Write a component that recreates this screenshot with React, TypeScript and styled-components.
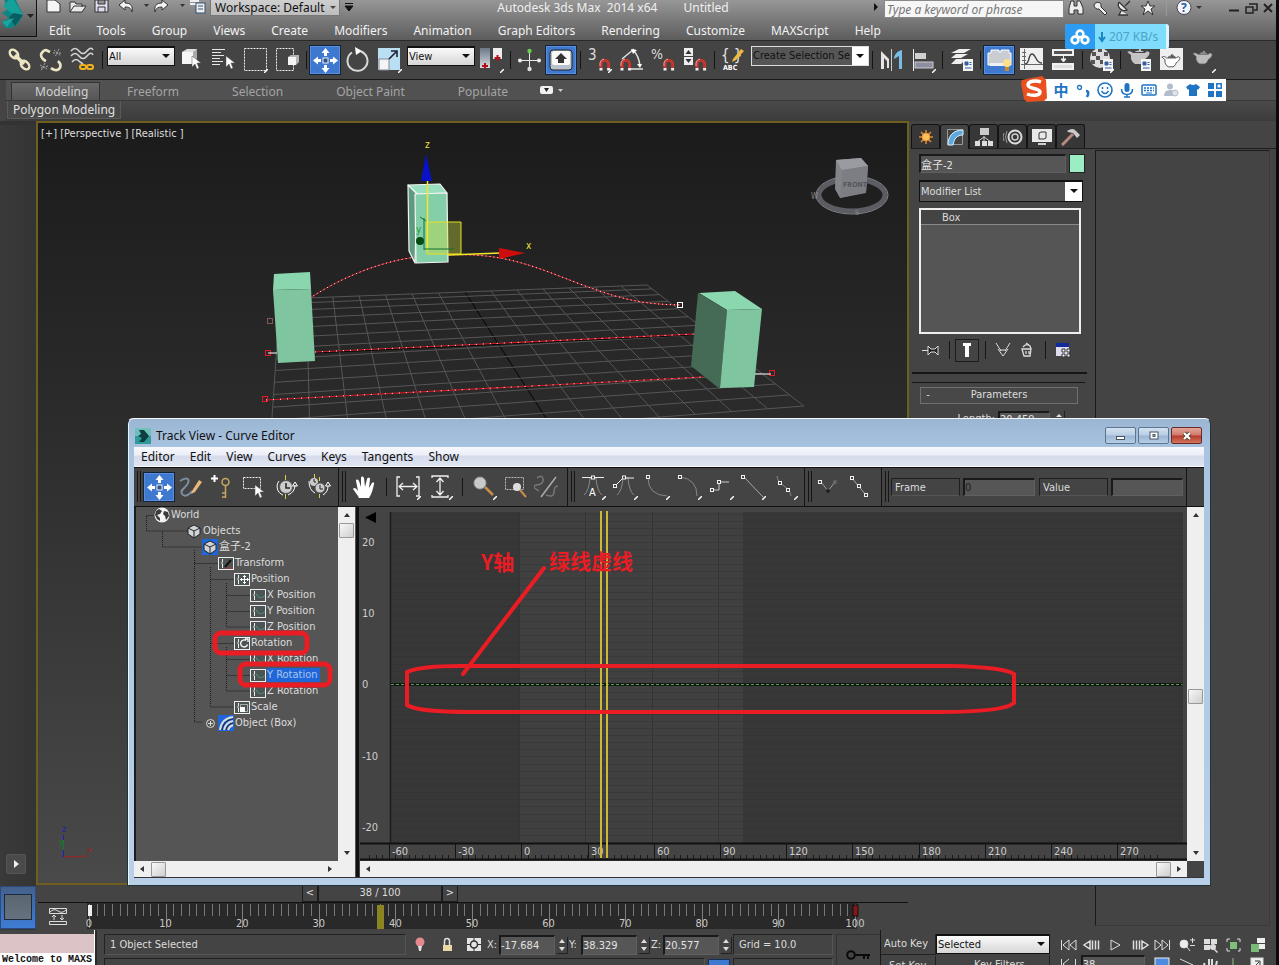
import React from 'react';
import styled, { createGlobalStyle, css } from 'styled-components';

const UI = '"Noto Sans", "Open Sans", "Noto Sans CJK SC", sans-serif';
const SMALL = '"DejaVu Sans Condensed", "Noto Sans", "Noto Sans CJK SC", sans-serif';

const Global = createGlobalStyle`
  * { box-sizing: border-box; }
  html, body { margin: 0; height: 100%; overflow: hidden; background: #444; }
  body { font: 11px/14px ${SMALL}; color: #dcdcdc; }
  button, input, select { font: inherit; color: inherit; margin: 0; padding: 0; border: 0; border-radius: 0; background: none; outline: none; min-width: 0; }
  svg { display: block; flex: none; }
`;

/* ---------- icons ---------- */

const magnet = (x: number, y: number) => (
  <g>
    <path d={`M${x} ${y + 9}v-4a3.800 3.800 0 0 1 7.600 0v4`} fill="none" stroke="#c4372f" strokeWidth="3" />
    <path d={`M${x} ${y + 9}v2.500M${x + 7.6} ${y + 9}v2.500`} stroke="#eee" strokeWidth="3" />
    <path d={`M${x - 1} ${y + 7}v-3a5 5 0 0 1 4 -4`} fill="none" stroke="#f2a39c" />
  </g>
);
const corner = <path d="M27 23v1l-3 3h-1v-1l3-3z" fill="#fff" stroke="none" />;
const curveNode = (x: number, y: number) => <rect x={x - 1.5} y={y - 1.5} width="3" height="3" fill="#444" stroke="#f0f0f0" />;
const cursor = (x: number, y: number) => (
  <path d={`M${x} ${y}v11l3-3 2 5 2-1-2-5h4z`} fill="#fff" stroke="#555" strokeWidth=".5" />
);
const listBadge = (
  <g>
    <rect x="16" y="13" width="10" height="12" fill="#f4f4f4" />
    <path d="M18 16h3v3h-3zM22.500 16.500h2M22.500 18.500h2M18 22h6.500" stroke="#355f9e" fill="#355f9e" />
  </g>
);
const teapot = (
  <path d="M5 12c-2-1-3-3-4-3 3-2 5 0 6 1h12c2-3 6-1 4 2-1 2-3 3-4 4-1 3-2 4-4 5H9c-2-1-3-3-4-5zM9 9c1-2 7-2 9 0zM13 6h2v2h-2z" />
);
const moveArrows = (
  <g fill="#fff">
    <rect x="12" y="12" width="5" height="5" fill="#35507c" stroke="#e8eefc" />
    <path d="M14.500 2l4 5h-2.500v3h-3V7h-2.500zM14.500 27l-4-5h2.500v-3h3v3h2.500zM2 14.500l5-4v2.500h3v3H7v2.500zM27 14.500l-5 4v-2.500h-3v-3h3v-2.500z" />
  </g>
);

const icons: Record<string, React.ReactNode> = {
  link: (
    <g fill="none" stroke="#ece5c4" strokeWidth="2.400">
      <ellipse cx="9" cy="8" rx="5" ry="3.400" transform="rotate(45 9 8)" />
      <ellipse cx="20" cy="19" rx="5" ry="3.400" transform="rotate(45 20 19)" />
      <path d="M10 9l9 9" strokeWidth="3.500" />
    </g>
  ),
  unlink: (
    <g fill="none" stroke="#ece5c4" strokeWidth="2.600">
      <path d="M9 15c-3-1-5-4-5-6s3-5 5-5l4 2M14 22c2 2 6 3 8 1s2-5-1-8" />
      <path d="M17 4l7 6M22 3l-4 8M16 7h9M3 19l7 4M8 17l-4 8M11 20l-7 2" stroke="#aaa" strokeWidth="1" strokeDasharray="2 1" />
    </g>
  ),
  bind: (
    <g fill="none">
      <path d="M2 5q4-5 8 0t8 0 6-1M2 10q4-5 8 0t8 0 6-1M3 16q4-5 8 0l3 2" stroke="#d5d5d5" strokeWidth="1.600" />
      <rect x="11" y="19" width="6" height="4" rx="2" stroke="#f2b41c" strokeWidth="2" />
      <rect x="18" y="19" width="6" height="4" rx="2" stroke="#f2b41c" strokeWidth="2" />
    </g>
  ),
  selectObj: (
    <g>
      <path d="M5 6l5-3h10v11l-4 4H5z" fill="#ddd" />
      <path d="M5 6h11v12H5z" fill="#f6f6f6" />
      <path d="M16 6l4-3v12l-4 3z" fill="#a9a9a9" />
      {cursor(15, 10)}
    </g>
  ),
  selectName: (
    <g>
      <path d="M3 3.500h13M3 6.500h9M3 9.500h12M3 12.500h8M3 15.500h11M3 18.500h8" stroke="#e6e6e6" />
      {cursor(17, 10)}
    </g>
  ),
  region: (
    <g>
      <rect x="3.500" y="2.500" width="22" height="22" fill="none" stroke="#eee" strokeDasharray="2 1" />
      {corner}
    </g>
  ),
  windowCross: (
    <g>
      <rect x="3.500" y="2.500" width="17" height="22" fill="none" stroke="#eee" strokeDasharray="2 1" />
      <path d="M15 11l3-2h8v7l-3 3h-8z" fill="#b5b5b5" />
      <path d="M15 11h8v8h-8z" fill="#f4f4f4" />
    </g>
  ),
  move: moveArrows,
  rotate: (
    <g>
      <path d="M9 6.500a10 10 0 1 0 9 -1" fill="none" stroke="#d9d9d9" strokeWidth="2" />
      <path d="M12 1l7 4-6 4z" fill="#fff" />
    </g>
  ),
  scale: (
    <g>
      <rect x="3" y="2" width="22" height="22" fill="#b9e0f2" />
      <path d="M4 13h10v11H4z" fill="#f4f4f4" stroke="#889" />
      <path d="M14 13l7-7M16 5h6v6" stroke="#223" fill="none" strokeWidth="1.600" />
      {corner}
    </g>
  ),
  pivot: (
    <g>
      <rect x="3" y="2" width="10" height="20" fill="url(#pv)" />
      <rect x="16" y="2" width="9" height="11" fill="#eee" />
      <path d="M8 17v6M5 20h6M20.500 9v6M17.500 12h6" stroke="#b3111a" strokeWidth="2" />
      <defs>
        <linearGradient id="pv" x1="0" y1="0" x2="0" y2="1">
          <stop offset="0" stopColor="#6b7886" />
          <stop offset="1" stopColor="#d6dbe0" />
        </linearGradient>
      </defs>
      {corner}
    </g>
  ),
  manipulate: (
    <g>
      <path d="M14.500 5v18M5 14.500h20" stroke="#e8e8e8" />
      <circle cx="14.500" cy="5" r="2.200" fill="#6ccc4a" />
      <circle cx="5" cy="14.500" r="2" fill="#eee" />
      <circle cx="24" cy="14.500" r="2" fill="#eee" />
      <circle cx="14.500" cy="23" r="2.200" fill="#ddd" />
    </g>
  ),
  keyboard: (
    <g>
      <rect x="3" y="4" width="22" height="20" rx="3" fill="#b9c2cc" stroke="#222" />
      <rect x="5" y="5" width="18" height="14" rx="2" fill="#fafafa" />
      <path d="M14 7l6 6h-3v4h-6v-4H8z" fill="#333" />
    </g>
  ),
  snap3: (
    <g>
      <text x="3" y="14" fontSize="15" fill="#ddd">3</text>
      {magnet(16, 13)}
      {corner}
    </g>
  ),
  snapAngle: (
    <g>
      {magnet(5, 13)}
      <path d="M5 13L17 3M13 23h13M16 4q6 6 7 16" fill="none" stroke="#e2e2e2" strokeWidth="1.500" />
      <path d="M14 3l6 1-4 4zM20 18h5l-2 4z" fill="#fff" />
    </g>
  ),
  snapPct: (
    <g>
      <text x="2" y="13" fontSize="14" fill="#ddd">%</text>
      {magnet(16, 13)}
    </g>
  ),
  snapSpin: (
    <g>
      <rect x="3" y="2" width="9" height="8" fill="#eee" />
      <rect x="3" y="11" width="9" height="8" fill="#eee" />
      <path d="M7.500 4l3 4h-6zM7.500 17l3-4h-6z" fill="#333" />
      {magnet(16, 13)}
    </g>
  ),
  named: (
    <g>
      <text x="2" y="14" fontSize="15" fill="#e8e8e8">{'{ }'}</text>
      <path d="M14 13l8-10 3 2-8 9-4 2z" fill="#f0b93c" />
      <text x="4" y="24" fontSize="7" fontWeight="700" fill="#fff">ABC</text>
    </g>
  ),
  mirror: (
    <g>
      <path d="M4 23V5l8 8v9h-2v-7l-3-3v11z" fill="#e5e5e5" />
      <path d="M25 23V4c-5 1-8 5-8 9l5-3v13z" fill="#79bde6" />
      <path d="M14.500 3v22" stroke="#ccc" />
    </g>
  ),
  align: (
    <g>
      <path d="M4.500 3v22" stroke="#eee" />
      <rect x="6" y="7" width="11" height="6" fill="#d0d0d0" />
      <rect x="6" y="16" width="18" height="6" fill="#8c8fa0" stroke="#ccc" />
      {corner}
    </g>
  ),
  layers: (
    <g>
      <path d="M12 3h12l-7 4H4zM9 8h12l-7 4H4zM9 13h10l-5 5H4z" fill="#eee" />
      {listBadge}
    </g>
  ),
  ribbonBulb: (
    <g>
      <path d="M3 7h3V4h8v2h2V4h8v3h2v12H3z" fill="#c9cdd2" stroke="#fff" />
      <path d="M5 17h19v3H5z" fill="#eef0f2" />
      <circle cx="22" cy="17" r="4" fill="#ffe08a" />
      <rect x="20" y="21" width="4" height="4" fill="#c98c22" />
    </g>
  ),
  curveEd: (
    <g>
      <rect x="3" y="2" width="23" height="22" fill="#efefef" />
      <path d="M7.500 3v20M4 18.500h22M5 6.500h4M5 10.500h4M5 14.500h4" stroke="#666" />
      <path d="M8 18c5 0 3-10 7-10s4 10 10 9" fill="none" stroke="#444" strokeWidth="1.500" />
    </g>
  ),
  schematic: (
    <g>
      <rect x="4" y="4" width="20" height="5" fill="#555" stroke="#f0f0f0" strokeWidth="2" />
      <rect x="4" y="18" width="20" height="5" fill="#ddd" stroke="#f0f0f0" strokeWidth="2" />
      <path d="M14.500 9v5M12 13h5l-2.500 3z" stroke="#eee" fill="#eee" />
    </g>
  ),
  material: (
    <g>
      <circle cx="13" cy="12" r="10" fill="#ddd" />
      <path d="M5 6h4v4H5zM11 2h4v4h-4zM9 10h4v4H9zM17 6h4v4h-4zM4 14h4v4H4zM13 14h4v4h-4z" fill="#555" />
      {listBadge}
      {corner}
    </g>
  ),
  renderSetup: (
    <g>
      <g fill="#c4c4c4" transform="translate(1 -3)">{teapot}</g>
      {listBadge}
    </g>
  ),
  renderFrame: (
    <g>
      <rect x="3" y="2" width="23" height="22" fill="#efefef" />
      <g fill="#fff" stroke="#333" transform="translate(4 4) scale(.8)">{teapot}</g>
    </g>
  ),
  render: (
    <g>
      <g fill="#bbb" stroke="#777" strokeWidth=".5" transform="translate(3 0) scale(.85)">{teapot}</g>
      {corner}
    </g>
  ),
  /* curve editor */
  draw: (
    <g>
      <path d="M3 8c6-4 10-3 8 2s-9 7-6 11 8 0 10-3" fill="none" stroke="#7d8fa3" strokeWidth="2" />
      <path d="M15 18l7-11 3 2-7 10-4 2z" fill="#e6b87c" />
    </g>
  ),
  addKey: (
    <g>
      <path d="M5.500 2v7M2 5.500h7" stroke="#fff" strokeWidth="2" />
      <circle cx="16.500" cy="9" r="3.500" fill="none" stroke="#c7a860" strokeWidth="1.500" />
      <path d="M16.500 12v13M16 20h-3M16 24h-3" stroke="#c7a860" strokeWidth="1.500" />
    </g>
  ),
  regionKeys: (
    <g>
      <rect x="2.500" y="4.500" width="17" height="11" fill="none" stroke="#eee" strokeDasharray="2 1" />
      {cursor(14, 12)}
    </g>
  ),
  retime: (
    <g>
      <circle cx="13" cy="14" r="6.500" fill="#ccc" stroke="#555" />
      <path d="M13 10v5h4" stroke="#222" strokeWidth="1.500" fill="none" />
      <path d="M12.500 2v5M12.500 21v5" stroke="#e0cf4a" />
      <path d="M6 8a9 9 0 0 0 4 14M15 22q7-3 7-10M19.500 13l2.500-4 2.500 4z" stroke="#fff" fill="none" />
    </g>
  ),
  retimeAll: (
    <g>
      <circle cx="9" cy="9" r="4" fill="#ccc" />
      <circle cx="15" cy="15" r="5" fill="#ccc" stroke="#555" />
      <path d="M15 12v4h3M9 6v3h2" stroke="#222" fill="none" />
      <path d="M9.500 1v4M14.500 21v4M14.500 4v4" stroke="#e0cf4a" />
      <path d="M4 8q0 9 6 12M18 22q5-3 5-9M20.500 13l2.500-4 2.500 4z" stroke="#fff" fill="none" />
    </g>
  ),
  hand: (
    <path d="M9 25c-2-4-4-6-6-9 1-2 3-1 5 2L6 8c0-2 2-2 3 0l2 6V5c0-2 2-2 3 0l1 9 2-8c1-2 3-1 3 0l-1 9 3-5c1-1 3 0 2 1-1 5-2 9-5 14z" fill="#fff" />
  ),
  extH: (
    <g fill="none" stroke="#f0f0f0" strokeWidth="1.300">
      <path d="M6 4H3v19h3M22 4h3v19h-3M6 13.500h16M9 10l-4 3.500L9 17M19 10l4 3.500-4 3.500" />
      {corner}
    </g>
  ),
  extV: (
    <g fill="none" stroke="#f0f0f0" strokeWidth="1.300">
      <path d="M6 5V3h16v2M6 22v2h16v-2M14 6v15M10.500 9L14 5l3.500 4M10.500 18l3.500 4 3.500-4" />
      {corner}
    </g>
  ),
  zoom: (
    <g>
      <path d="M15 14l8 8" stroke="#c98f4a" strokeWidth="2.500" />
      <circle cx="10" cy="10" r="6" fill="#c9c9c9" stroke="#999" />
      {corner}
    </g>
  ),
  zoomRegion: (
    <g>
      <rect x="3.500" y="4.500" width="18" height="12" fill="none" stroke="#bbb" strokeDasharray="2 1" />
      <path d="M18 17l6 7" stroke="#c98f4a" strokeWidth="2" />
      <circle cx="15" cy="14" r="4" fill="#ddd" />
    </g>
  ),
  isolate: (
    <g fill="none" stroke="#777">
      <path d="M3 5q5-4 6 1t-6 6 2 6M12 22q8 3 8-3t4-6" strokeWidth="1.500" />
      <path d="M22 4L7 24" stroke="#aaa" strokeWidth="1.500" />
    </g>
  ),
  tanAuto: (
    <g fill="none" stroke="#aaa">
      <path d="M5 22q5-4 6-17h6q1 13 6 17" stroke="#888" />
      <path d="M3 4.500h22" stroke="#eee" />
      {curveNode(14, 4.5)}
      <text x="10" y="23" fontSize="11" fill="#fff" stroke="none">A</text>
      {corner}
    </g>
  ),
  tanSpline: (
    <g fill="none" stroke="#888">
      <path d="M6 22q5-4 6-17h5q1 13 6 17" />
      <path d="M4 13l8-8h11" stroke="#eee" />
      {curveNode(4, 13)}
      {curveNode(13, 4.5)}
      {corner}
    </g>
  ),
  tanFast: (
    <g fill="none" stroke="#888">
      <path d="M5 5q0 17 19 18" />
      {curveNode(5, 4)}
      {corner}
    </g>
  ),
  tanSlow: (
    <g fill="none" stroke="#888">
      <path d="M5 4q17 2 17 19" />
      {curveNode(5, 4)}
      {corner}
    </g>
  ),
  tanStep: (
    <g fill="none" stroke="#ccc">
      <path d="M6 17h6V9h10" />
      {curveNode(5, 17)}
      {curveNode(12, 9)}
      {corner}
    </g>
  ),
  tanLinear: (
    <g fill="none" stroke="#aaa">
      <path d="M5 4l19 20" />
      {curveNode(4, 4)}
      {corner}
    </g>
  ),
  tanSmooth: (
    <g fill="none" stroke="#888">
      <path d="M6 3q0 5 7 10t7 10" />
      {curveNode(9, 10)}
      {curveNode(17, 17)}
      {corner}
    </g>
  ),
  breakTan: (
    <g fill="none" stroke="#999">
      <path d="M5 9l7 9 7-9" />
      {curveNode(4, 9)}
      <rect x="18" y="8" width="2" height="2" fill="#444" stroke="#777" />
      <path d="M10 17h4l-2 3z" fill="#111" stroke="#222" />
    </g>
  ),
  unifyTan: (
    <g fill="none" stroke="#aaa">
      <path d="M3 4l15 18" />
      {curveNode(4, 5)}
      {curveNode(11, 13)}
      {curveNode(18, 22)}
    </g>
  ),
};

const Icon = ({ name, size = 28 }: { name: string; size?: number }) => (
  <svg width={size} height={size} viewBox="0 0 28 28" aria-hidden="true">
    {icons[name]}
  </svg>
);

/* ---------- shell ---------- */

const Shell = styled.div`
  position: relative;
  display: flex;
  flex-direction: column;
  height: 100vh;
  border-right: 3px solid #0a0a0a;
  background: #444;
  overflow: hidden;
`;

const Header = styled.header`
  display: grid;
  grid-template-columns: 37px 1fr;
  height: 41px;
  flex: none;
  background: linear-gradient(#979797, #5c5c5c);
  border-bottom: 1px solid #2a2a2a;
  font-family: ${UI};
`;

const AppButton = styled.button`
  height: 37px;
  border-right: 1px solid #111;
  border-bottom: 1px solid #111;
  background: linear-gradient(#8a8a8a, #4e4e4e);
`;

const TitleRow = styled.div`
  display: flex;
  height: 20px;
  align-items: flex-start;
`;

const Quick = styled.div`
  display: flex;
  width: 173px;
  padding-left: 5px;
`;

const TitleText = styled.div`
  flex: 1;
  display: flex;
  justify-content: center;
  gap: 26px;
  padding-right: 4px;
  font-size: 12px;
  line-height: 16px;
  color: #f0f0f0;
  white-space: pre;
`;

const Search = styled.input`
  width: 180px;
  height: 18px;
  margin-left: 4px;
  padding: 0 2px;
  border: 1px solid #888;
  background: #f6f6f6;
  font: italic 12px/16px ${UI};
  &::placeholder { color: #777; opacity: 1; }
`;

const MenuBar = styled.nav<{ $light?: boolean }>`
  display: flex;
  align-items: center;
  gap: ${(p) => (p.$light ? 15 : 26)}px;
  padding: ${(p) => (p.$light ? '0 0 0 7px' : '2px 0 0 12px')};
  height: 20px;
  color: ${(p) => (p.$light ? '#111' : '#f2f2f2')};
  font: 12px/18px ${UI};
  flex: none;
  ${(p) => p.$light && css`background: linear-gradient(#f7f8fd, #eceff8 40%, #d7dcec 50%, #dfe4f2); border-bottom: 1px solid #f8f8f8;`}
`;

const MenuItem = styled.button`white-space: nowrap;`;

const ToolBar = styled.div`
  display: flex;
  align-items: center;
  height: 39px;
  flex: none;
  padding-left: 3px;
  border-bottom: 1px solid #1a1a1a;
  background: #444;
`;

const ToolButton = styled.button<{ $on?: boolean }>`
  display: grid;
  place-items: center;
  width: 32px;
  height: 30px;
  flex: none;
  ${(p) => p.$on && css`background: #3f78cf; border: 1px solid #14233c; box-shadow: inset 0 0 0 1px #5b8fdc;`}
`;

const Sep = styled.i<{ $w?: number }>`
  width: ${(p) => p.$w ?? 6}px;
  height: 18px;
  flex: none;
  background: linear-gradient(#151515, #151515) center / 1px 100% no-repeat;
`;

const Drop = styled.span<{ $w: number; $h: number; $tone?: 'dark' | 'field' | 'title' }>`
  position: relative;
  display: block;
  flex: none;
  width: ${(p) => p.$w}px;
  height: ${(p) => p.$h}px;
  select {
    appearance: none;
    display: block;
    width: 100%;
    height: 100%;
    padding: 0 18px 0 1px;
    border: 1px solid #111;
    border-top-width: 2px;
    background: linear-gradient(#fafafa, #d6d6d6);
    color: #111;
    ${(p) => p.$tone === 'dark' && css`background: linear-gradient(90deg, #565656 0 calc(100% - 16px), #fff calc(100% - 16px)); border: 1px solid #ddd; color: #111;`}
    ${(p) => p.$tone === 'field' && css`background: linear-gradient(90deg, #555 0 calc(100% - 17px), #fff calc(100% - 17px)); color: #ddd;`}
    ${(p) => p.$tone === 'title' && css`background: linear-gradient(#cfcfcf, #bdbdbd); border: 1px solid #777; border-top: 0; padding: 0 12px 0 4px; font: 12px/14px ${UI};`}
  }
  &::after {
    content: '';
    position: absolute;
    right: ${(p) => (p.$tone === 'title' ? 4 : 5)}px;
    top: calc(50% - 2px);
    border: ${(p) => (p.$tone === 'title' ? 3 : 4)}px solid transparent;
    border-top-color: ${(p) => (p.$tone === 'title' ? '#444' : '#111')};
    border-bottom: 0;
    pointer-events: none;
  }
`;

const Select = ({ label, value, w, h, tone }: { label: string; value: string; w: number; h: number; tone?: 'dark' | 'field' | 'title' }) => (
  <Drop $w={w} $h={h} $tone={tone}>
    <select aria-label={label} defaultValue={value}>
      <option>{value}</option>
    </select>
  </Drop>
);

const SelectSlot = styled.div`padding: 0 0 8px 2px;`;

const RibbonTabs = styled.div`
  display: flex;
  align-items: flex-end;
  height: 21px;
  flex: none;
  margin-left: 6px;
  padding-left: 5px;
  border-bottom: 1px solid #383838;
  background: #515151;
  font: 12px/20px ${UI};
`;

const RibbonTab = styled.button<{ $on?: boolean; $last?: boolean }>`
  margin-right: ${(p) => (p.$last ? 32 : 53)}px;
  color: #a4a4a4;
  height: 18px;
  white-space: nowrap;
  ${(p) => p.$on && css`
    width: 89px;
    padding-left: 23px;
    margin-right: 27px;
    text-align: left;
    color: #d2d2d2;
    border: 1px solid #333;
    border-bottom: 0;
    line-height: 16px;
    background: linear-gradient(#686868, #565656);
  `}
`;

const RibbonPanel = styled.div`
  height: 20px;
  flex: none;
  margin-left: 6px;
  padding-left: 1px;
  background: linear-gradient(#4a4a4a, #3b3b3b);
  font: 12px/18px ${UI};
`;

const PanelTab = styled.button`
  height: 18px;
  padding: 0 5px;
  border: 1px solid #5a5a5a;
  border-top: 0;
  background: #484848;
  color: #e0e0e0;
`;

const Workspace = styled.main`
  display: grid;
  grid-template-columns: 36px minmax(0, 1fr) 367px;
  flex: 1;
  min-height: 0;
`;

const LeftStrip = styled.aside`
  display: flex;
  flex-direction: column;
  justify-content: flex-end;
  border-top: 4px solid #333;
  background: linear-gradient(90deg, #3a3a3a, #343434);
`;

const PlayButton = styled.button`
  display: grid;
  place-items: center;
  width: 20px;
  height: 20px;
  margin: 0 0 12px 6px;
  border: 1px solid #555;
  border-radius: 2px;
  background: #4a4a4a;
`;

const LayoutButton = styled.button`
  height: 43px;
  padding: 7px 3px 8px;
  border: 1px solid #2a4a80;
  background: linear-gradient(#44608a, #3d7dd6);
  margin-bottom: 1px;
`;

const LayoutFace = styled.span`
  display: block;
  height: 100%;
  border: 1px solid #1e2a3c;
  background: linear-gradient(#5b6673, #66727f);
`;

const Center = styled.section`
  display: flex;
  flex-direction: column;
  min-height: 0;
`;

const Viewport = styled.div`
  position: relative;
  flex: 1;
  min-height: 0;
  border: 2px solid #6f5f1f;
  background: linear-gradient(#1b1b1b, #2b2b2b 38%, #4a4a4a);
  overflow: hidden;
`;

const ViewLabel = styled.div`
  position: absolute;
  left: 3px;
  top: 4px;
  color: #dedede;
`;

const TimeRow = styled.div`
  display: flex;
  height: 17px;
  flex: none;
  padding-left: 266px;
`;

const TimeButton = styled.button<{ $wide?: boolean }>`
  width: ${(p) => (p.$wide ? 124 : 16)}px;
  border: 1px solid #1c1c1c;
  border-top: 0;
  line-height: 16px;
`;

const TrackBar = styled.div`
  display: flex;
  height: 28px;
  flex: none;
`;

const TrackIcon = styled.button`
  width: 51px;
  padding-right: 8px;
  display: grid;
  place-items: center;
`;

const RulerDrawing = styled.svg`
  flex: 1;
  min-width: 0;
  height: 28px;
  overflow: visible;
`;

/* ---------- command panel ---------- */

const Command = styled.aside`
  display: flex;
  flex-direction: column;
  padding: 3px 0 0 2px;
  background: #444;
`;

const CmdTabs = styled.div`
  display: flex;
  height: 25px;
  flex: none;
  border-bottom: 1px solid #1c1c1c;
`;

const CmdTab = styled.button<{ $on?: boolean }>`
  display: grid;
  place-items: center;
  width: 29px;
  height: ${(p) => (p.$on ? 25 : 24)}px;
  border: 1px solid #141414;
  border-radius: 3px 3px 0 0;
  border-bottom: 0;
  background: ${(p) => (p.$on ? '#444' : '#373737')};
`;

const CmdBody = styled.div`
  display: grid;
  grid-template-columns: 184px 1fr;
  flex: 1;
  padding-right: 6px;
`;

const CmdColumn = styled.div`
  padding: 5px 0 0 8px;
`;

const CmdSide = styled.div`
  margin-top: 1px;
  margin-bottom: 4px;
  border: 1px solid #3a3a3a;
  border-top-color: #1a1a1a;
  border-left-color: #1a1a1a;
`;

const NameRow = styled.div`
  display: flex;
  gap: 3px;
  margin-bottom: 7px;
`;

const Field = styled.input<{ $w: number; $h?: number }>`
  width: ${(p) => p.$w}px;
  height: ${(p) => p.$h ?? 19}px;
  flex: none;
  padding: 0;
  border: 1px solid #606060;
  border-top: 2px solid #1a1a1a;
  border-left: 2px solid #1a1a1a;
  background: #565656;
  color: #e2e2e2;
`;

const DarkField = styled(Field)`
  color: #1c1c1c;
`;

const Swatch = styled.button`
  width: 16px;
  height: 19px;
  border: 1px solid #222;
  background: #9cedc4;
`;

const Stack = styled.div`
  width: 162px;
  height: 126px;
  margin-top: 6px;
  border: 2px solid #eee;
  background: #555;
`;

const StackItem = styled.div`
  height: 15px;
  padding-left: 21px;
  line-height: 15px;
  border-bottom: 1px solid #888;
  background: #444;
`;

const StackTools = styled.div`
  display: flex;
  align-items: center;
  height: 32px;
  margin-bottom: 6px;
`;

const StackTool = styled.button<{ $on?: boolean }>`
  display: grid;
  place-items: center;
  width: 24px;
  height: 23px;
  ${(p) => p.$on && css`border: 1px solid #1c1c1c;`}
`;

const Rule = styled.hr`
  width: 175px;
  height: 2px;
  margin: 0 0 8px -7px;
  border: 0;
  background: #161616;
`;

const Rollout = styled.section`
  width: 173px;
  margin-left: -7px;
  padding: 4px 8px;
  border-top: 1px solid #161616;
`;

const RollHead = styled.button`
  display: grid;
  grid-template-columns: 8px 1fr 8px;
  width: 158px;
  height: 17px;
  padding: 0 3px;
  border: 1px solid #707070;
  background: #484848;
`;

const ParamRow = styled.label`
  display: flex;
  align-items: center;
  justify-content: flex-end;
  gap: 3px;
  padding: 6px 12px 0 0;
`;

/* ---------- status bar ---------- */

const Status = styled.footer`
  display: grid;
  grid-template-columns: 95px minmax(0, 1fr) 396px;
  height: 35px;
  flex: none;
  background: #444;
`;

const Listener = styled.div`
  padding-top: 4px;
  border-right: 1px solid #fff;
`;

const Macro = styled.div`
  height: 20px;
  background: #dcc3c6;
  border-bottom: 1px solid #fff;
`;

const Output = styled.div`
  height: 11px;
  padding-left: 2px;
  background: #fff;
  color: #111;
  white-space: nowrap;
  font: 700 10px/12px "Liberation Mono", monospace;
`;

const StatusMid = styled.div`
  display: grid;
  grid-template-columns: minmax(0, 1fr) 44px;
  column-gap: 3px;
  padding: 4px 0 0 7px;
  border-left: 2px solid #2a2a2a;
`;

const KeyCell = styled.button`
  display: grid;
  place-items: center;
  height: 42px;
  border-left: 1px solid #333;
  border-top: 1px solid #333;
`;

const StatusRow = styled.div`
  display: flex;
  align-items: center;
  height: 21px;
  margin-bottom: 3px;
`;

const Well = styled.div<{ $w?: number }>`
  ${(p) => (p.$w ? css`width: ${p.$w}px; flex: none;` : css`flex: 1; min-width: 0;`)}
  height: 21px;
  padding: 0 5px;
  line-height: 20px;
  white-space: nowrap;
  border: 1px solid #555;
  border-top-color: #222;
  border-left-color: #222;
`;

const IconCell = styled.button`
  display: grid;
  place-items: center;
  width: 27px;
`;

const Coord = styled.label`
  display: flex;
  align-items: center;
  width: 82px;
  gap: 1px;
  span { width: 11px; }
`;

const Spin = ({ small }: { small?: boolean }) => (
  <svg width="12" height="18" viewBox="0 0 12 18" aria-hidden="true">
    <path d="M11.500 1v16.500H1" fill="none" stroke="#222" />
    <path d={small ? 'M3 7l3-3 3 3z' : 'M3 7l3-4 3 4zM3 11l3 4 3-4z'} fill="#ddd" />
  </svg>
);

const StatusEnd = styled.div`
  display: grid;
  grid-template-columns: 55px 114px 1fr;
  padding-top: 4px;
  border-left: 1px solid #1a1a1a;
`;

const KeyCol = styled.div`
  display: flex;
  flex-direction: column;
  gap: 1px;
  overflow: hidden;
  height: 31px;
`;

const KeyButton = styled.button<{ $pad?: number }>`
  height: 21px;
  flex: none;
  padding: 0 3px 0 ${(p) => p.$pad ?? 3}px;
  text-align: left;
  white-space: nowrap;
  border-right: 1px solid #222;
  border-bottom: 1px solid #222;
`;

/* ---------- curve editor window ---------- */

const Win = styled.section`
  position: absolute;
  left: 127px;
  right: 65px;
  top: 418px;
  height: 468px;
  display: flex;
  flex-direction: column;
  padding: 0 6px 7px;
  border: 1px solid #20343c;
  border-top-color: #f4f8fc;
  border-radius: 6px 6px 0 0;
  background: linear-gradient(#9bb6d3, #a9c4e0 30px, #b8d0e8);
  box-shadow: inset 1px 0 #eaf4fb;
`;

const WinTitle = styled.div`
  display: flex;
  align-items: center;
  height: 28px;
  flex: none;
  padding: 5px 0 0 1px;
  color: #111;
  font: 12px/18px ${UI};
`;

const WinName = styled.h1`
  flex: 1;
  margin: 0 0 0 5px;
  font: inherit;
`;

const WinButton = styled.button<{ $close?: boolean }>`
  display: grid;
  place-items: center;
  width: 31px;
  height: 17px;
  margin-right: 2px;
  border: 1px solid #5c7590;
  border-radius: 2px;
  background: linear-gradient(#d3e1f0, #b9cee3 48%, #9ab5d2 52%, #b6cee6);
  ${(p) => p.$close && css`border-color: #6a2a24; background: linear-gradient(#e2a69c, #d1786a 48%, #b8392a 52%, #d2745f);`}
`;

const CurveTools = styled.div`
  display: flex;
  height: 40px;
  flex: none;
  border-top: 1px solid #111;
  border-bottom: 1px solid #111;
  background: #444;
`;

const ToolGroup = styled.div`
  display: flex;
  align-items: center;
  padding: 0 3px 0 9px;
  border-right: 1px solid #161616;
  background:
    linear-gradient(#161616, #161616) 3px 3px / 1px 31px no-repeat,
    linear-gradient(#161616, #161616) 6px 3px / 1px 31px no-repeat;
`;

const ToolLabel = styled.label<{ $gap?: boolean }>`
  width: 69px;
  height: 18px;
  padding-left: 3px;
  line-height: 17px;
  border: 1px solid #1e1e1e;
  border-bottom-color: #555;
  margin: 0 3px 0 ${(p) => (p.$gap ? 4 : 0)}px;
`;

const CurveBody = styled.div`
  display: grid;
  grid-template-columns: 221px 5px minmax(0, 1fr);
  flex: 1;
  min-height: 0;
  border-bottom: 1px solid #333;
`;

const Pane = styled.div`
  display: grid;
  grid-template-columns: minmax(0, 1fr) 17px;
  grid-template-rows: minmax(0, 1fr) 16px;
  min-width: 0;
  min-height: 0;
  background: #444;
`;

const Splitter = styled.div`
  background: #111;
  border-left: 1px solid #555;
  border-right: 1px solid #444;
`;

const Tree = styled.ul`
  position: relative;
  margin: 0;
  padding: 0;
  list-style: none;
  background: #555;
  border-left: 2px solid #1c1c1c;
  overflow: hidden;
  svg.lines { position: absolute; left: 0; top: 0; }
`;

const Node = styled.li<{ $indent: number }>`
  position: relative;
  display: flex;
  align-items: center;
  gap: 1px;
  height: 16px;
  padding-left: ${(p) => p.$indent}px;
  white-space: nowrap;
`;

const NodeText = styled.span<{ $on?: boolean }>`
  line-height: 14px;
  ${(p) => p.$on && css`background: #1f66d8; color: #a9c4ee; padding-right: 2px;`}
`;

const NodeIcon = styled.i<{ $on?: boolean }>`
  display: grid;
  place-items: center;
  width: 16px;
  height: 16px;
  background: ${(p) => (p.$on ? '#1f66d8' : 'transparent')};
`;

const Scroll = styled.div<{ $v?: boolean; $blank?: boolean }>`
  display: flex;
  flex-direction: ${(p) => (p.$v ? 'column' : 'row')};
  align-items: center;
  background: ${(p) => (p.$blank ? '#444' : '#f0eff0')};
  min-width: 0;
  min-height: 0;
`;

const ScrollEnd = styled.button`
  display: grid;
  place-items: center;
  width: 16px;
  height: 16px;
  flex: none;
`;

const Thumb = styled.i`
  width: 15px;
  height: 15px;
  flex: none;
  border: 1px solid #999;
  border-radius: 1px;
  background: linear-gradient(135deg, #f8f8f8, #cfcfcf);
`;

const Space = styled.i<{ $g: number }>`flex: ${(p) => p.$g} 1 0;`;

const dirs: Record<string, string> = { up: 'M1 6l3-4 3 4z', down: 'M1 2l3 4 3-4z', left: 'M6 1L2 4l4 3z', right: 'M2 1l4 3-4 3z' };
const Tri = ({ d, fill = '#333' }: { d: string; fill?: string }) => (
  <svg width="8" height="8" viewBox="0 0 8 8" aria-hidden="true">
    <path d={dirs[d]} fill={fill} />
  </svg>
);

const ScrollBar = ({ v, before, after }: { v?: boolean; before: number; after: number }) => (
  <Scroll $v={v}>
    <ScrollEnd aria-label={v ? 'Scroll up' : 'Scroll left'}><Tri d={v ? 'up' : 'left'} /></ScrollEnd>
    <Space $g={before} />
    <Thumb />
    <Space $g={after} />
    <ScrollEnd aria-label={v ? 'Scroll down' : 'Scroll right'}><Tri d={v ? 'down' : 'right'} /></ScrollEnd>
  </Scroll>
);

const Markup = styled.svg`
  position: absolute;
  left: -1px;
  top: -1px;
  width: calc(100% + 2px);
  height: calc(100% + 2px);
  pointer-events: none;
`;

/* ---------- floating desktop widgets ---------- */

const NetBadge = styled.div`
  position: absolute;
  right: 107px;
  top: 24px;
  display: flex;
  align-items: center;
  gap: 2px;
  width: 104px;
  height: 25px;
  border-radius: 3px;
  overflow: hidden;
  background: #7fdcfc;
  border-right: 3px solid #d9f5ff;
  color: #4aa3c4;
  font: 12px/24px ${UI};
  white-space: nowrap;
`;

const NetLogo = styled.span`
  display: grid;
  place-items: center;
  width: 30px;
  height: 25px;
  background: #2b9cf2;
`;

const ImeBar = styled.div`
  position: absolute;
  right: 50px;
  top: 79px;
  display: flex;
  align-items: center;
  width: 194px;
  height: 22px;
  padding-left: 18px;
  background: #fff;
`;

const ImeLogo = styled.svg`
  position: absolute;
  left: -12px;
  top: -4px;
`;

const ImeButton = styled.button`
  display: grid;
  place-items: center;
  width: 22px;
  height: 22px;
  color: #1f74c4;
  font: 700 15px/20px "Noto Sans CJK SC", sans-serif;
`;

/* ---------- data ---------- */

const menus = ['Edit', 'Tools', 'Group', 'Views', 'Create', 'Modifiers', 'Animation', 'Graph Editors', 'Rendering', 'Customize', 'MAXScript', 'Help'];
const curveMenus = ['Editor', 'Edit', 'View', 'Curves', 'Keys', 'Tangents', 'Show'];

const tree: { label: string; indent: number; kind: string; on?: boolean }[] = [
  { label: 'World', indent: 18, kind: 'world' },
  { label: 'Objects', indent: 50, kind: 'cube' },
  { label: '盒子-2', indent: 66, kind: 'cube', on: true },
  { label: 'Transform', indent: 82, kind: 'xform' },
  { label: 'Position', indent: 98, kind: 'pos' },
  { label: 'X Position', indent: 114, kind: 'curve' },
  { label: 'Y Position', indent: 114, kind: 'curve' },
  { label: 'Z Position', indent: 114, kind: 'curve' },
  { label: 'Rotation', indent: 98, kind: 'rot' },
  { label: 'X Rotation', indent: 114, kind: 'curve' },
  { label: 'Y Rotation', indent: 114, kind: 'curve', on: true },
  { label: 'Z Rotation', indent: 114, kind: 'curve' },
  { label: 'Scale', indent: 98, kind: 'scl' },
  { label: 'Object (Box)', indent: 82, kind: 'mod', on: true },
];

const frame = (
  <g>
    <rect x=".500" y="2.500" width="15" height="12" fill="#4c5553" stroke="#eee" />
    <path d="M4.500 4v3l-1 1 1 1v4" fill="none" stroke="#eee" />
  </g>
);

const nodeIcons: Record<string, React.ReactNode> = {
  world: (
    <g>
      <circle cx="8" cy="8" r="7.500" fill="#f4f4f4" />
      <path d="M5 2l3 2-2 3-3 1 3 3v3l-3-2-2-4 1-4zM10 4l4 1 1 4-3 4-1-4-2-2z" fill="#3c3c3c" />
    </g>
  ),
  cube: (
    <g stroke="#222" strokeWidth="1">
      <path d="M8 2l6 3v6l-6 4-6-4V5z" fill="#cfd4d8" />
      <path d="M2 5l6 3 6-3M8 8v7" fill="none" />
    </g>
  ),
  xform: <g>{frame}<path d="M7 12l6-7" stroke="#111" strokeWidth="2" /><path d="M8 13h6" stroke="#a33" /></g>,
  pos: <g>{frame}<path d="M10.500 4v9M6 8.500h9M9 5.500h3M9 11.500h3M7.500 7v3M13.500 7v3" stroke="#fff" /></g>,
  rot: <g>{frame}<path d="M12 5.500a3.500 3.500 0 1 0 1.500 4M11 4h3v3" stroke="#fff" fill="none" strokeWidth="1.300" /></g>,
  scl: <g>{frame}<rect x="6.500" y="5.500" width="7" height="7" fill="none" stroke="#fff" strokeDasharray="1 1" /><rect x="6" y="8" width="5" height="5" fill="#fff" /></g>,
  curve: <g>{frame}<path d="M6 6.500c2 5 6 5 9 2" stroke="#4b9480" fill="none" /></g>,
  mod: (
    <g fill="none" stroke="#ddd" strokeWidth="2">
      <path d="M2 15C3 7 7 3 15 2M6 15c1-5 4-8 9-9M10 15c1-3 2-4 5-5" />
      <path d="M4 15C5 9 8 5 15 4M8 15c1-4 3-6 7-7" stroke="#222" strokeWidth="1" />
    </g>
  ),
};

/* ---------- drawings ---------- */

const lerp = (a: number[], b: number[], t: number) => [a[0] + (b[0] - a[0]) * t, a[1] + (b[1] - a[1]) * t];
const bend = (a: number[], m: number[], b: number[], t: number) => (t < 0.5 ? lerp(a, m, t * 2) : lerp(m, b, t * 2 - 1));

const Grid = () => {
  const tl = [280, 299], tm = [465, 292], tr = [647, 285];
  const bl = [270, 447], bm = [551, 426], br = [804, 406];
  const cols = Array.from({ length: 15 }, (_, i) => [bend(tl, tm, tr, i / 14), bend(bl, bm, br, i / 14)]);
  const rows = Array.from({ length: 15 }, (_, i) => {
    const t = Math.pow(i / 14, 1.3);
    return [lerp(tl, bl, t), lerp(tr, br, t)];
  });
  return (
    <g stroke="#565656" strokeWidth="1">
      {[...cols, ...rows].map(([a, b], i) => (
        <line key={i} x1={a[0]} y1={a[1]} x2={b[0]} y2={b[1]} stroke={i === 7 ? '#050505' : undefined} />
      ))}
    </g>
  );
};

const Scene = () => (
  <svg width="100%" height="100%" viewBox="38 123 869 760" preserveAspectRatio="xMidYMid slice" role="img" aria-label="Perspective view">
    <Grid />
    <path d="M315 353L694 335" stroke="#080808" />
    <path d="M315 352L694 334M266 400L703 377" stroke="#d41420" strokeWidth="1.200" fill="none" />
    <path d="M315 352L694 334M266 400L703 377" stroke="#fff" strokeDasharray="1 6" fill="none" />
    <path d="M310 298C350 272 395 257 430 256C500 250 530 265 580 284S650 304 680 305" stroke="#c31722" fill="none" />
    <path d="M310 298C350 272 395 257 430 256C500 250 530 265 580 284S650 304 680 305" stroke="#fff" strokeDasharray="1 3" fill="none" />
    <g fill="none" stroke="#e01b24">
      <rect x="265.500" y="350.500" width="5" height="5" />
      <rect x="262.500" y="396.500" width="5" height="5" />
      <rect x="769.500" y="370.500" width="5" height="5" />
      <rect x="267.500" y="318.500" width="5" height="5" stroke="#855" />
      <rect x="677.500" y="302.500" width="5" height="5" stroke="#fff" />
      <path d="M268 353h9M754 374h17" stroke="#fff" />
    </g>
    <path d="M274 274l36-2 1 17-38 1z" fill="#8ad6ae" />
    <path d="M273 290l38-1 4 72-37 2z" fill="#7fc5a0" />
    <path d="M699 293l36-2 27 18-35 1z" fill="#8bd8b0" />
    <path d="M698 293l29 17-7 79-29-23z" fill="#456a55" />
    <path d="M727 310l35-1-8 78-34 1z" fill="#7fc5a0" />
    <g stroke="#f4f4f4" strokeWidth="1.200" strokeLinejoin="round">
      <path d="M408 185l32-1 7 9-30 1z" fill="#9adfc0" />
      <path d="M408 185l9 9-2 69-6-12z" fill="#5f9a80" />
      <path d="M415 194l32-1 1 69-32 1z" fill="#84cfa9" />
    </g>
    <path d="M427 222h34v32h-34z" fill="#c8d83c" fillOpacity=".4" stroke="#e8e020" />
    <path d="M427.500 181v70M448 255l53-2" stroke="#f0e92a" strokeWidth="1.500" />
    <path d="M424 218v32M424 249h30M420 217l6 4" stroke="#13702c" />
    <path d="M499 248l26 5-26 6z" fill="#cf0d0d" />
    <path d="M426 154l6 27h-11z" fill="#0a12c8" />
    <circle cx="420" cy="241" r="4" fill="#064a14" />
    <g fontFamily={SMALL} fontSize="10" fill="#e8e33a">
      <text x="425" y="148">z</text>
      <text x="526" y="249">x</text>
      <text x="416" y="233" fill="#1d9a3c">y</text>
    </g>
    {/* view cube */}
    <g>
      <ellipse cx="852" cy="195" rx="33" ry="16" fill="none" stroke="#5c5d62" strokeWidth="5" />
      <ellipse cx="852" cy="195" rx="36" ry="19" fill="none" stroke="#84858b" />
      <path d="M836 160l25-2 7 8-2 26-26 6-5-9z" fill="#84858b" />
      <path d="M836 160l25-2 7 8-26 4z" fill="#9a9ba1" />
      <path d="M842 170l26-4-2 27-26 5z" fill="#7d7e84" />
      <text x="843" y="187" fontSize="7" fontWeight="700" fill="#56575c" fontFamily={SMALL}>FRONT</text>
      <text x="811" y="199" fontSize="8" fill="#888" fontFamily={SMALL}>W</text>
      <text x="855" y="215" fontSize="7" fill="#888" fontFamily={SMALL}>S</text>
    </g>
    {/* world axis */}
    <g fill="none">
      <path d="M63.500 835v22" stroke="#1b22b4" />
      <path d="M64 857l24-1" stroke="#a51f25" />
      <path d="M63.500 840v10" stroke="#157a2b" />
      <g fontFamily={SMALL} fontSize="9">
        <text x="62" y="832" fill="#1b22b4">z</text>
        <text x="87" y="853" fill="#a51f25">x</text>
        <text x="59" y="845" fill="#157a2b">y</text>
      </g>
    </g>
  </svg>
);

const Ruler = () => (
  <RulerDrawing viewBox="87 902 822 28" preserveAspectRatio="xMinYMid slice" role="img" aria-label="Track bar">
    <rect x="87" y="903" width="770" height="26" fill="#292929" />
    <path d="M38 902.500h870" stroke="#111" />
    {Array.from({ length: 101 }, (_, i) => (
      <path key={i} d={`M${Math.round(89 + i * 7.66) + 0.5} 904v${i % 10 ? 12 : 24}`} stroke={i % 10 ? '#777' : '#808080'} />
    ))}
    <rect x="88" y="905" width="4" height="11" fill="#eee" />
    <rect x="377" y="905" width="7" height="24" fill="#8a8520" />
    <rect x="853" y="905" width="5" height="11" fill="#8a1519" stroke="#111" />
    <g fontFamily={SMALL} fontSize="11" fill="#c8c8c8" textAnchor="middle">
      {Array.from({ length: 11 }, (_, i) => (
        <text key={i} x={89 + i * 76.6} y="927">{i * 10}</text>
      ))}
    </g>
  </RulerDrawing>
);

const Curves = () => (
  <svg width="100%" height="100%" viewBox="360 506 827 354" preserveAspectRatio="xMinYMin slice" role="img" aria-label="Function curves">
    <rect x="360" y="506" width="828" height="355" fill="#444" />
    <rect x="391" y="511" width="792" height="331" fill="#373737" />
    <rect x="519" y="511" width="224" height="331" fill="#404040" />
    {Array.from({ length: 46 }, (_, i) => {
      const y = Math.round(684 + (i - 24) * 7.14) + 0.5;
      return <path key={i} d={`M392 ${y}h791`} stroke="#303030" strokeOpacity=".45" />;
    })}
    {[519, 585, 652, 718].map((x) => <path key={x} d={`M${x}.500 511v331`} stroke="#343434" />)}
    <path d="M390.500 511v331" stroke="#1c1c1c" strokeWidth="1.500" />
    <path d="M391 683.500h791" stroke="#101a10" strokeWidth="3" />
    <path d="M391 683.500h791" stroke="#62965f" strokeDasharray="3 2" />
    <path d="M376 511v11l-11-5.500z" fill="#000" />
    <path d="M360 842.500h828M360 858.500h828" stroke="#111" strokeWidth="2" />
    {Array.from({ length: 120 }, (_, i) => (
      <path key={i} d={`M${Math.round(369 + i * 6.62) + 0.5} 854v4`} stroke="#1a1a1a" />
    ))}
    <g fontFamily={SMALL} fontSize="11" fill="#cdcdcd">
      {Array.from({ length: 12 }, (_, i) => {
        const x = Math.round(389 + i * 66.2);
        return (
          <g key={i}>
            <path d={`M${x}.500 843v14`} stroke="#151515" />
            <text x={x + 3} y="854">{-60 + i * 30}</text>
          </g>
        );
      })}
      {[20, 10, 0, -10, -20].map((v, i) => (
        <text key={v} x="362" y={Math.round(545 + i * 71.2)}>{v}</text>
      ))}
    </g>
    <path d="M601 510v347M607 510v347" stroke="#c9b83a" strokeWidth="2" />
  </svg>
);

const TreeLines = () => (
  <svg className="lines" width="130" height="240" viewBox="136 507 130 240" aria-hidden="true">
    <path
      fill="none"
      stroke="#1a1a1a"
      strokeDasharray="1 1"
      d="M146.500 515.500h8M146.500 516v15h42M162.500 532v15h40M194.500 550v172h8M194.500 563.500h24M210.500 567v140h24M210.500 579.500h24M226.500 583v44h24M226.500 595.500h24M226.500 611.500h24M210.500 643.500h24M226.500 647v44h24M226.500 659.500h24M226.500 675.500h24"
    />
    <circle cx="210.500" cy="723.500" r="4" fill="#555" stroke="#ddd" />
    <path d="M208 723.500h5M210.500 721v5" stroke="#ddd" />
  </svg>
);

const Quicks: React.ReactNode[] = [
  <path d="M2 0h8l5 4v8H2z" fill="#f4f4f4" stroke="#333" />,
  <path d="M1 12V2h5l1 2h6v3M1 12l4-6h12l-4 6z" fill="#e8e8e8" stroke="#333" />,
  <path d="M2 0h13v12H2zM5 0v4h7V0M5 12V7h7v5" fill="#dde" stroke="#333" />,
  <path d="M2 5l6-5v3c6 0 8 3 7 9-1-4-3-5-7-5v3z" fill="#f4f4f4" stroke="#333" />,
  <path d="M6 4h5l-2.500 3z" fill="#333" />,
  <path d="M15 5L9 0v3C3 3 1 6 2 12c1-4 3-5 7-5v3z" fill="#f4f4f4" stroke="#333" />,
  <path d="M6 4h5l-2.500 3z" fill="#333" />,
  <g><path d="M1 1h9M1 4h9" stroke="#eee" strokeWidth="2" /><rect x="7" y="3" width="9" height="10" fill="#eee" stroke="#357" /><path d="M9 6h5M9 9h5" stroke="#357" /></g>,
];

const TopIcons: React.ReactNode[] = [
  <path d="M1 14V8l2-7h3v5h3V1h3l3 7v6h-5v-4H6v4z" fill="#eee" stroke="#333" />,
  <path d="M2 5a4 4 0 0 1 7-1v3l6 6-2 2-6-6a4 4 0 0 1-5-4z" fill="#eee" stroke="#333" />,
  <path d="M3 2l8 8a6 6 0 0 1-8-8M9 6l5-5M5 11l-2 4h9" fill="#eee" stroke="#333" strokeWidth="1.300" />,
  <path d="M8 1l2 5h5l-4 3 2 6-5-4-5 4 2-6-4-3h5z" fill="#f4f4f4" stroke="#333" />,
];

const Glyph = ({ children, w, h = 16, vb }: { children: React.ReactNode; w: number; h?: number; vb?: string }) => (
  <svg width={w} height={h} viewBox={vb ?? `0 0 ${w} ${h}`} aria-hidden="true">{children}</svg>
);

const QuickButton = styled.button<{ $w: number }>`
  display: grid;
  place-items: center;
  width: ${(p) => p.$w}px;
`;

const HeadSep = styled.i`
  width: 12px;
  height: 16px;
  background: linear-gradient(#999, #999) center / 1px 100% no-repeat;
`;

const RibbonToggle = styled.button`
  display: block;
  height: 18px;
`;

const Playback = styled.div`
  display: grid;
  grid-template-columns: repeat(9, 1fr);
  grid-template-rows: 21px 18px;
  padding: 0 6px 0 7px;
`;

const PlayCell = styled.button`
  display: grid;
  place-items: center;
`;

const playIcons: React.ReactNode[] = [
  <path d="M1.500 3v10M9 3L3 8l6 5zM16 3l-6 5 6 5z" />,
  <path d="M7 4L1 8l6 4zM9.500 3.500v9M12.500 3.500v9M15.500 3.500v9" strokeWidth="1.500" />,
  <path d="M4 3l9 5-9 5z" />,
  <path d="M11 4l6 4-6 4zM2.500 3.500v9M5.500 3.500v9M8.500 3.500v9" strokeWidth="1.500" />,
  <path d="M15.500 3v10M8 3l6 5-6 5zM1 3l6 5-6 5z" />,
  <g><circle cx="6" cy="7" r="4" fill="#eee" /><path d="M9 10l3 4M12 3h5M14.500 1v5M12 8.500h5" /></g>,
  <g fill="#ddd" stroke="none"><rect x="2" y="2" width="6" height="5" /><rect x="9" y="2" width="6" height="5" /><rect x="2" y="8" width="6" height="5" /><circle cx="11" cy="10" r="3" /><path d="M12 11l4 4-1 1-4-4z" /></g>,
  <g><path d="M2 5V2h3M12 2h3v3M2 11v3h3M15 11v3h-2" /><rect x="5" y="5" width="7" height="7" fill="#7ec07a" stroke="none" /></g>,
  <g stroke="none"><path d="M8 1h8v5H8zM8 7h8v5H8z" fill="#eee" /><rect x="2" y="7" width="8" height="8" fill="#7cba78" /></g>,
];

const lowIcons: React.ReactNode[] = [
  <path d="M1.500 3v10M9 3L3 8l6 5M15.500 3v10" />,
  <rect x="1" y="2" width="14" height="12" fill="#4d8be0" stroke="#eee" />,
  <path d="M2 3l13 6-13 6" />,
  <path d="M4 14L2 7M7 14V3M10 14V3M13 14l2-9" strokeWidth="2" />,
  <path d="M8 2v12M3 10l5 5 5-5" stroke="#8cc480" />,
  <g><rect x="2" y="2" width="12" height="12" fill="#eee" /><path d="M5 11l5-5M6 5h5v5" stroke="#333" /></g>,
];

const mainTools: (string | null | React.ReactElement)[] = [
  'link', 'unlink', 'bind', null,
  <SelectSlot key="f"><Select label="Selection filter" value="All" w={68} h={20} /></SelectSlot>,
  'selectObj', 'selectName', 'region', 'windowCross', null, 'move', 'rotate', 'scale',
  <SelectSlot key="c"><Select label="Coordinate system" value="View" w={68} h={20} /></SelectSlot>,
  'pivot', null, 'manipulate', 'keyboard', null, 'snap3', 'snapAngle', 'snapPct', 'snapSpin', null, 'named',
  <SelectSlot key="s"><Select label="Named selection set" value="Create Selection Set" w={118} h={20} tone="dark" /></SelectSlot>,
  null, 'mirror', 'align', null, 'layers', null, 'ribbonBulb', 'curveEd', 'schematic', null, 'material', null,
  'renderSetup', 'renderFrame', 'render',
];
const pressed = ['move', 'keyboard', 'ribbonBulb'];

const curveGroups: (string | null)[][] = [
  ['move', 'draw', 'addKey', 'regionKeys', 'retime', 'retimeAll'],
  ['hand', null, 'extH', 'extV', null, 'zoom', 'zoomRegion', 'isolate'],
  ['tanAuto', 'tanSpline', 'tanFast', 'tanSlow', 'tanStep', 'tanLinear', 'tanSmooth'],
  ['breakTan', 'unifyTan'],
];

const CurveWindow = () => (
  <Win aria-label="Track View - Curve Editor">
    <WinTitle>
      <svg width="16" height="16" viewBox="0 0 16 16" aria-hidden="true">
        <rect width="16" height="16" fill="#6fc0bb" />
        <path d="M0 8h16v8H0z" fill="#2f9a98" />
        <path d="M4 2h5l5 6-5 6H4l3-4-4-2 3-2z" fill="#0c3f42" />
      </svg>
      <WinName>Track View - Curve Editor</WinName>
      <WinButton aria-label="Minimize"><Glyph w={12} h={10}><rect x="1.500" y="5.500" width="8" height="3" fill="#fff" stroke="#456" /></Glyph></WinButton>
      <WinButton aria-label="Maximize"><Glyph w={12} h={10}><rect x="2" y="1" width="8" height="7" fill="#fff" stroke="#456" /><rect x="5" y="3.500" width="2" height="2" fill="#89a" stroke="#456" /></Glyph></WinButton>
      <WinButton $close aria-label="Close"><Glyph w={12} h={10}><path d="M3 2l6 6M9 2L3 8" stroke="#543" strokeWidth="4" /><path d="M3 2l6 6M9 2L3 8" stroke="#fff" strokeWidth="2.200" /></Glyph></WinButton>
    </WinTitle>
    <MenuBar $light>{curveMenus.map((m) => <MenuItem key={m}>{m}</MenuItem>)}</MenuBar>
    <CurveTools>
      {curveGroups.map((g, gi) => (
        <ToolGroup key={gi}>
          {g.map((n, i) => (n ? <ToolButton key={i} $on={n === 'move'} aria-label={n}><Icon name={n} /></ToolButton> : <Sep key={i} $w={12} />))}
        </ToolGroup>
      ))}
      <ToolGroup>
        <ToolLabel htmlFor="frame">Frame</ToolLabel>
        <DarkField id="frame" $w={72} $h={18} defaultValue="0" />
        <ToolLabel htmlFor="value" $gap>Value</ToolLabel>
        <Field id="value" $w={72} $h={18} />
      </ToolGroup>
    </CurveTools>
    <CurveBody>
      <Pane>
        <Tree>
          <TreeLines />
          {tree.map((n) => (
            <Node key={n.label} $indent={n.indent}>
              <NodeIcon $on={n.on && n.kind !== 'curve'}><Glyph w={16}>{nodeIcons[n.kind]}</Glyph></NodeIcon>
              <NodeText $on={n.on && n.kind === 'curve'}>{n.label}</NodeText>
            </Node>
          ))}
        </Tree>
        <ScrollBar v before={0} after={1} />
        <ScrollBar before={1} after={170} />
        <Scroll />
      </Pane>
      <Splitter />
      <Pane>
        <Curves />
        <ScrollBar v before={165} after={140} />
        <ScrollBar before={1} after={0} />
        <Scroll $blank />
      </Pane>
    </CurveBody>
    <Markup viewBox="127 418 1084 468" preserveAspectRatio="none">
      <g fill="none" stroke="#ea1c24" strokeWidth="5" strokeLinecap="round">
        <rect x="215" y="633" width="92" height="20" rx="6" />
        <rect x="240" y="664" width="90" height="21" rx="6" />
        <path d="M407 672Q420 666 460 666H950Q1003 667 1014 674V703Q1003 712 940 712H470Q418 712 407 705Z" strokeWidth="4" />
        <path d="M544 568L463 674" strokeWidth="4" />
      </g>
      <g fill="#ea1c24" fontFamily='"Noto Sans CJK SC", sans-serif' fontWeight="700">
        <text x="481" y="570" fontSize="21">Y轴</text>
        <text x="549" y="569" fontSize="21">绿线虚线</text>
      </g>
    </Markup>
  </Win>
);

export default function App() {
  return (
    <Shell>
      <Global />
      <Header>
        <AppButton aria-label="Application menu">
          <Glyph w={36} h={36}>
            <path d="M4 0h12l7 15-5 9-6 4H5l-3-6 7-4-7-5 6-4z" fill="#0e8585" />
            <path d="M9 0h5l9 15-12-2-8-7z" fill="#15a09a" />
            <path d="M23 15l-8 11-6-9 5-4z" fill="#0a5d62" />
            <path d="M2 22l12-4-7 9z" fill="#18a8a0" />
            <path d="M27 14h7l-3.500 4z" fill="#222" />
          </Glyph>
        </AppButton>
        <div>
          <TitleRow>
            <Quick>
              {Quicks.map((q, i) => <QuickButton key={i} $w={[24, 24, 24, 24, 12, 24, 12, 24][i]} aria-label={`Quick action ${i + 1}`}><Glyph w={18} h={14}>{q}</Glyph></QuickButton>)}
            </Quick>
            <Select label="Workspace" value="Workspace: Default" w={130} h={16} tone="title" />
            <QuickButton $w={18} aria-label="Customize"><Glyph w={10} h={12}><path d="M1 3.500h8M1 6h8l-4 5z" fill="#111" stroke="#111" /></Glyph></QuickButton>
            <TitleText><span>{'Autodesk 3ds Max  2014 x64'}</span><span>Untitled</span></TitleText>
            <QuickButton $w={8} aria-label="Expand search"><Glyph w={6} h={14}><path d="M1 3l4 4-4 4z" fill="#111" /></Glyph></QuickButton>
            <Search placeholder="Type a keyword or phrase" aria-label="Search" />
            {TopIcons.map((t, i) => <QuickButton key={i} $w={24} aria-label={`Info tool ${i + 1}`}><Glyph w={16}>{t}</Glyph></QuickButton>)}
            <HeadSep />
            <QuickButton $w={24} aria-label="Help">
              <Glyph w={16}>
                <circle cx="8" cy="7.500" r="7" fill="#f4f6fa" stroke="#445" />
                <text x="5" y="12" fontSize="12" fontWeight="700" fill="#2a58a8">?</text>
              </Glyph>
            </QuickButton>
            <QuickButton $w={30} aria-label="Help menu"><Glyph w={30} h={14}><path d="M0 6h6l-3 3z" fill="#333" /></Glyph></QuickButton>
            <QuickButton $w={16} aria-label="Minimize"><Glyph w={14} h={16}><path d="M2 10.500h10" stroke="#222" strokeWidth="2" /></Glyph></QuickButton>
            <QuickButton $w={18} aria-label="Restore"><Glyph w={14} h={16}><path d="M5 4h8v6h-3M2 7h7v6H2z" fill="none" stroke="#222" strokeWidth="1.500" /></Glyph></QuickButton>
            <QuickButton $w={16} aria-label="Close"><Glyph w={12} h={16}><path d="M2 4l8 8M10 4l-8 8" stroke="#222" strokeWidth="2" /></Glyph></QuickButton>
          </TitleRow>
          <MenuBar>{menus.map((m) => <MenuItem key={m}>{m}</MenuItem>)}</MenuBar>
        </div>
      </Header>

      <ToolBar>
        {mainTools.map((t, i) =>
          t === null ? <Sep key={i} /> : typeof t === 'string' ? <ToolButton key={i} $on={pressed.includes(t)} aria-label={t}><Icon name={t} /></ToolButton> : t,
        )}
      </ToolBar>

      <RibbonTabs>
        <RibbonTab $on>Modeling</RibbonTab>
        <RibbonTab>Freeform</RibbonTab>
        <RibbonTab>Selection</RibbonTab>
        <RibbonTab>Object Paint</RibbonTab>
        <RibbonTab $last>Populate</RibbonTab>
        <RibbonToggle aria-label="Ribbon display"><Glyph w={26} h={18}><rect x="0" y="4" width="13" height="8" rx="2" fill="#f0f0f0" /><path d="M4 6h5l-2.500 4z" fill="#222" /><path d="M18 7h5l-2.500 3z" fill="#ccc" /></Glyph></RibbonToggle>
      </RibbonTabs>
      <RibbonPanel><PanelTab>Polygon Modeling</PanelTab></RibbonPanel>

      <Workspace>
        <LeftStrip>
          <PlayButton aria-label="Expand layouts"><Glyph w={8} h={12}><path d="M2 2l5 4-5 4z" fill="#eee" /></Glyph></PlayButton>
          <LayoutButton aria-label="Viewport layout"><LayoutFace /></LayoutButton>
        </LeftStrip>
        <Center>
          <Viewport>
            <Scene />
            <ViewLabel>[+] [Perspective ] [Realistic ]</ViewLabel>
          </Viewport>
          <TimeRow>
            <TimeButton>&lt;</TimeButton>
            <TimeButton $wide>38 / 100</TimeButton>
            <TimeButton>&gt;</TimeButton>
          </TimeRow>
          <TrackBar>
            <TrackIcon aria-label="Mini curve editor">
              <Glyph w={18} h={18} vb="0 0 18 18"><path d="M.500 1.500h17v5H.500zM.500 14.500h17v3H.500zM1 5q4-4 8-1t8-1M5 13V8M3 10l2-2 2 2M13 8v5M11 11l2 2 2-2" fill="none" stroke="#ddd" /></Glyph>
            </TrackIcon>
            <Ruler />
          </TrackBar>
        </Center>
        <Command>
          <CmdTabs>
            <CmdTab aria-label="Create"><Glyph w={18} h={18}><path d="M9 2v14M2 9h14M4 4l10 10M14 4L4 14" stroke="#d98a34" strokeWidth="1.500" /><circle cx="9" cy="9" r="4" fill="#ffc05c" stroke="#e08a28" /></Glyph></CmdTab>
            <CmdTab $on aria-label="Modify"><Glyph w={18} h={18}><path d="M1.500 1.500h15v15h-15z" fill="none" stroke="#999" /><path d="M2 17C2 8 7 2 17 2v5C11 7 8 11 7 17z" fill="#5fa8de" stroke="#dff1fb" /></Glyph></CmdTab>
            <CmdTab aria-label="Hierarchy"><Glyph w={18} h={18}><path d="M9 8v6M9 9l-7 5M9 9l7 5" stroke="#ccc" /><rect x="5" y="0" width="9" height="7" fill="#ccc" /><path d="M0 13h5v5H0zM7 13h5v5H7zM13 13h5v5h-5z" fill="#ddd" /></Glyph></CmdTab>
            <CmdTab aria-label="Motion"><Glyph w={20} h={18}><circle cx="12" cy="9" r="6.500" fill="none" stroke="#ddd" strokeWidth="2" /><circle cx="12" cy="9" r="3" fill="none" stroke="#ccc" strokeWidth="1.500" /><path d="M4 3q-3 6 0 12M1 5q-2 4 0 8" stroke="#999" fill="none" /></Glyph></CmdTab>
            <CmdTab aria-label="Display"><Glyph w={20} h={18}><rect x="0" y="1" width="20" height="13" fill="#e8e8e8" /><path d="M7 5l2-1h5v6l-2 1H7z" fill="none" stroke="#333" /><path d="M6 16h8" stroke="#ccc" strokeWidth="2" /></Glyph></CmdTab>
            <CmdTab aria-label="Utilities"><Glyph w={20} h={18}><path d="M12 6L1 17" stroke="#b58a7c" strokeWidth="3" /><path d="M6 3q6-4 9 0l4 4-3 3-4-5-5-1z" fill="#ccc" /></Glyph></CmdTab>
          </CmdTabs>
          <CmdBody>
            <CmdColumn>
              <NameRow>
                <Field $w={147} aria-label="Object name" defaultValue="盒子-2" />
                <Swatch aria-label="Object color" />
              </NameRow>
              <Select label="Modifier List" value="Modifier List" w={164} h={22} tone="field" />
              <Stack><StackItem>Box</StackItem></Stack>
              <StackTools>
                <StackTool aria-label="Pin stack"><Glyph w={18} h={12}><path d="M0 6.500h6" stroke="#ddd" /><path d="M6 2v9l3-3h4l3 3V2l-3 3H9z" fill="#222" stroke="#ddd" /></Glyph></StackTool>
                <Sep $w={12} />
                <StackTool $on aria-label="Show end result"><Glyph w={8} h={16}><path d="M0 1h8v3H6v11H2V4H0z" fill="#fff" /></Glyph></StackTool>
                <Sep $w={12} />
                <StackTool aria-label="Make unique"><Glyph w={16}><path d="M1 1l5 8M15 1l-5 8M3 7l5 7 5-7M5 8h6" fill="none" stroke="#ddd" /></Glyph></StackTool>
                <StackTool aria-label="Remove modifier"><Glyph w={14} h={16}><path d="M2 7h9l-1 7H4zM3 5q3-4 7-1l1 3M6 1l3 2M6 9v3M9 9v3" fill="none" stroke="#ddd" strokeWidth="1.300" /></Glyph></StackTool>
                <Sep $w={12} />
                <StackTool aria-label="Configure sets"><Glyph w={16}><rect x="1" y="1" width="13" height="13" fill="#dde" /><rect x="1" y="1" width="13" height="4" fill="#112a9c" /><path d="M7 7h3v3H7zM12 7h3v3h-3zM7 12h3v3H7zM12 12h3v3h-3z" fill="#fff" stroke="#333" /></Glyph></StackTool>
              </StackTools>
              <Rule />
              <Rollout>
                <RollHead><span>-</span><span>Parameters</span></RollHead>
                <ParamRow>Length: <Field $w={52} $h={16} defaultValue="20.459" /><Spin small /></ParamRow>
              </Rollout>
            </CmdColumn>
            <CmdSide />
          </CmdBody>
        </Command>
      </Workspace>

      <Status>
        <Listener>
          <Macro />
          <Output>Welcome to MAXS</Output>
        </Listener>
        <StatusMid>
          <div>
            <StatusRow>
              <Well>1 Object Selected</Well>
              <IconCell aria-label="Isolate"><Glyph w={12} h={16}><circle cx="6" cy="5" r="4.500" fill="#e3898f" /><path d="M4 9h4l-1 5H5z" fill="#ddd" /></Glyph></IconCell>
              <IconCell aria-label="Lock selection"><Glyph w={12} h={16}><path d="M3.500 8V4a2.500 2.500 0 0 1 5 0v4" fill="none" stroke="#ddd" strokeWidth="1.500" /><rect x="2" y="8" width="9" height="6" fill="#ead9a8" /></Glyph></IconCell>
              <IconCell aria-label="Absolute mode"><Glyph w={14} h={16}><rect x="0" y="1" width="14" height="13" fill="#e4e4e4" /><circle cx="7" cy="7.500" r="3.500" fill="#e4e4e4" stroke="#333" strokeWidth="1.500" /><path d="M7 1v3M7 11v3M0 7.500h3M11 7.500h3" stroke="#333" /></Glyph></IconCell>
              <Coord><span>X:</span><Field $w={56} $h={20} defaultValue="-17.684" /><Spin /></Coord>
              <Coord><span>Y:</span><Field $w={56} $h={20} defaultValue="38.329" /><Spin /></Coord>
              <Coord><span>Z:</span><Field $w={56} $h={20} defaultValue="20.577" /><Spin /></Coord>
              <Well $w={100}>Grid = 10.0</Well>
            </StatusRow>
            <StatusRow>
              <Well />
              <LowBlue aria-label="Time tag" />
              <Well $w={100} />
            </StatusRow>
          </div>
          <KeyCell aria-label="Set keys">
            <Glyph w={26} h={12}><circle cx="5" cy="5" r="3.800" fill="none" stroke="#0a0a0a" strokeWidth="2" /><path d="M9 5h15M18 5v4M22 5v4" fill="none" stroke="#0a0a0a" strokeWidth="2" /></Glyph>
          </KeyCell>
        </StatusMid>
        <StatusEnd>
          <KeyCol>
            <KeyButton>Auto Key</KeyButton>
            <KeyButton $pad={8}>Set Key</KeyButton>
          </KeyCol>
          <KeyCol>
            <Select label="Key selection" value="Selected" w={114} h={20} />
            <KeyButton $pad={38}>Key Filters...</KeyButton>
          </KeyCol>
          <Playback>
            {playIcons.map((p, i) => <PlayCell key={i} aria-label={`Playback ${i + 1}`}><svg width="18" height="16" viewBox="0 0 18 16" fill="none" stroke="#ddd">{p}</svg></PlayCell>)}
            <PlayCell aria-label="Key mode"><svg width="18" height="16" viewBox="0 0 18 16" fill="none" stroke="#ddd">{lowIcons[0]}</svg></PlayCell>
            <FrameField aria-label="Current frame" $w={64} $h={18} defaultValue="38" />
            {lowIcons.slice(1).map((p, i) => <PlayCell key={i} aria-label={`Navigation ${i + 1}`}><svg width="18" height="16" viewBox="0 0 18 16" fill="none" stroke="#ddd">{p}</svg></PlayCell>)}
          </Playback>
        </StatusEnd>
      </Status>

      <CurveWindow />

      <NetBadge>
        <NetLogo>
          <Glyph w={20} h={16}><g fill="none" stroke="#fff" strokeWidth="2.600"><circle cx="10" cy="5" r="3.400" /><circle cx="5" cy="11" r="3.400" /><circle cx="15" cy="11" r="3.400" /></g></Glyph>
        </NetLogo>
        <Glyph w={10} h={12}><path d="M5 1v8M2 6l3 4 3-4" fill="none" stroke="#1c86c4" strokeWidth="2" /></Glyph>
        207 KB/s
      </NetBadge>

      <ImeBar>
        <ImeLogo width="28" height="28" viewBox="0 0 28 28" aria-hidden="true">
          <path d="M2 5l20-4 4 4 1 18-3 3-17 1-3-3L1 8z" fill="#e9501f" />
          <path d="M21 7c-5-2-13-1-13 3s12 3 12 7-8 4-13 2" fill="none" stroke="#fff" strokeWidth="3.500" />
        </ImeLogo>
        <ImeButton>中</ImeButton>
        <ImeButton aria-label="Punctuation"><Glyph w={14} h={16}><circle cx="3.500" cy="5.500" r="2" fill="none" stroke="#1f74c4" strokeWidth="1.300" /><path d="M10 9q4 0 1 6" fill="none" stroke="#1f74c4" strokeWidth="2.500" /></Glyph></ImeButton>
        <ImeButton aria-label="Emoji"><Glyph w={16}><circle cx="8" cy="8" r="7" fill="none" stroke="#1f74c4" strokeWidth="1.600" /><path d="M4.500 9q3.500 5 7 0M5.500 5v2M10.500 5v2" fill="none" stroke="#1f74c4" strokeWidth="1.500" /></Glyph></ImeButton>
        <ImeButton aria-label="Voice"><Glyph w={14} h={16}><rect x="4.500" y="1" width="5" height="9" rx="2.500" fill="#1f74c4" /><path d="M1.500 7q0 5.500 5.500 5.500T12.500 7M7 13v2M4 15h6" fill="none" stroke="#1f74c4" strokeWidth="1.500" /></Glyph></ImeButton>
        <ImeButton aria-label="Keyboard"><Glyph w={16}><rect x="1" y="3" width="14" height="10" rx="1" fill="none" stroke="#1f74c4" strokeWidth="1.500" /><path d="M3 6h10M3 8.500h10" stroke="#1f74c4" strokeWidth="1.500" strokeDasharray="2 1" /><path d="M5 11h6" stroke="#1f74c4" /></Glyph></ImeButton>
        <ImeButton aria-label="Account"><Glyph w={16}><circle cx="7" cy="4.500" r="3" fill="#b4bccb" /><path d="M1 14q0-6 6-6t6 3v3z" fill="#b4bccb" /><circle cx="12" cy="11" r="3" fill="#dfe3ea" stroke="#b4bccb" /></Glyph></ImeButton>
        <ImeButton aria-label="Skin"><Glyph w={16}><path d="M5 2q3 2 6 0l4 3-2 3-1-1v7H4V7L3 8 1 5z" fill="#1f74c4" /></Glyph></ImeButton>
        <ImeButton aria-label="Toolbox"><Glyph w={16}><path d="M1 1h6v6H1zM1 9h6v6H1zM9 9h6v6H9z" fill="#1f74c4" /><rect x="9.800" y="1.800" width="4.400" height="4.400" fill="none" stroke="#1f74c4" strokeWidth="1.500" /></Glyph></ImeButton>
      </ImeBar>
    </Shell>
  );
}

const LowBlue = styled.button`
  width: 22px;
  height: 20px;
  margin: 0 3px;
  border: 1px solid #16305c;
  background: radial-gradient(circle at 50% 90%, #fff 5px, #3f78cf 6px);
`;

const FrameField = styled(Field)`grid-column: span 3;`;
